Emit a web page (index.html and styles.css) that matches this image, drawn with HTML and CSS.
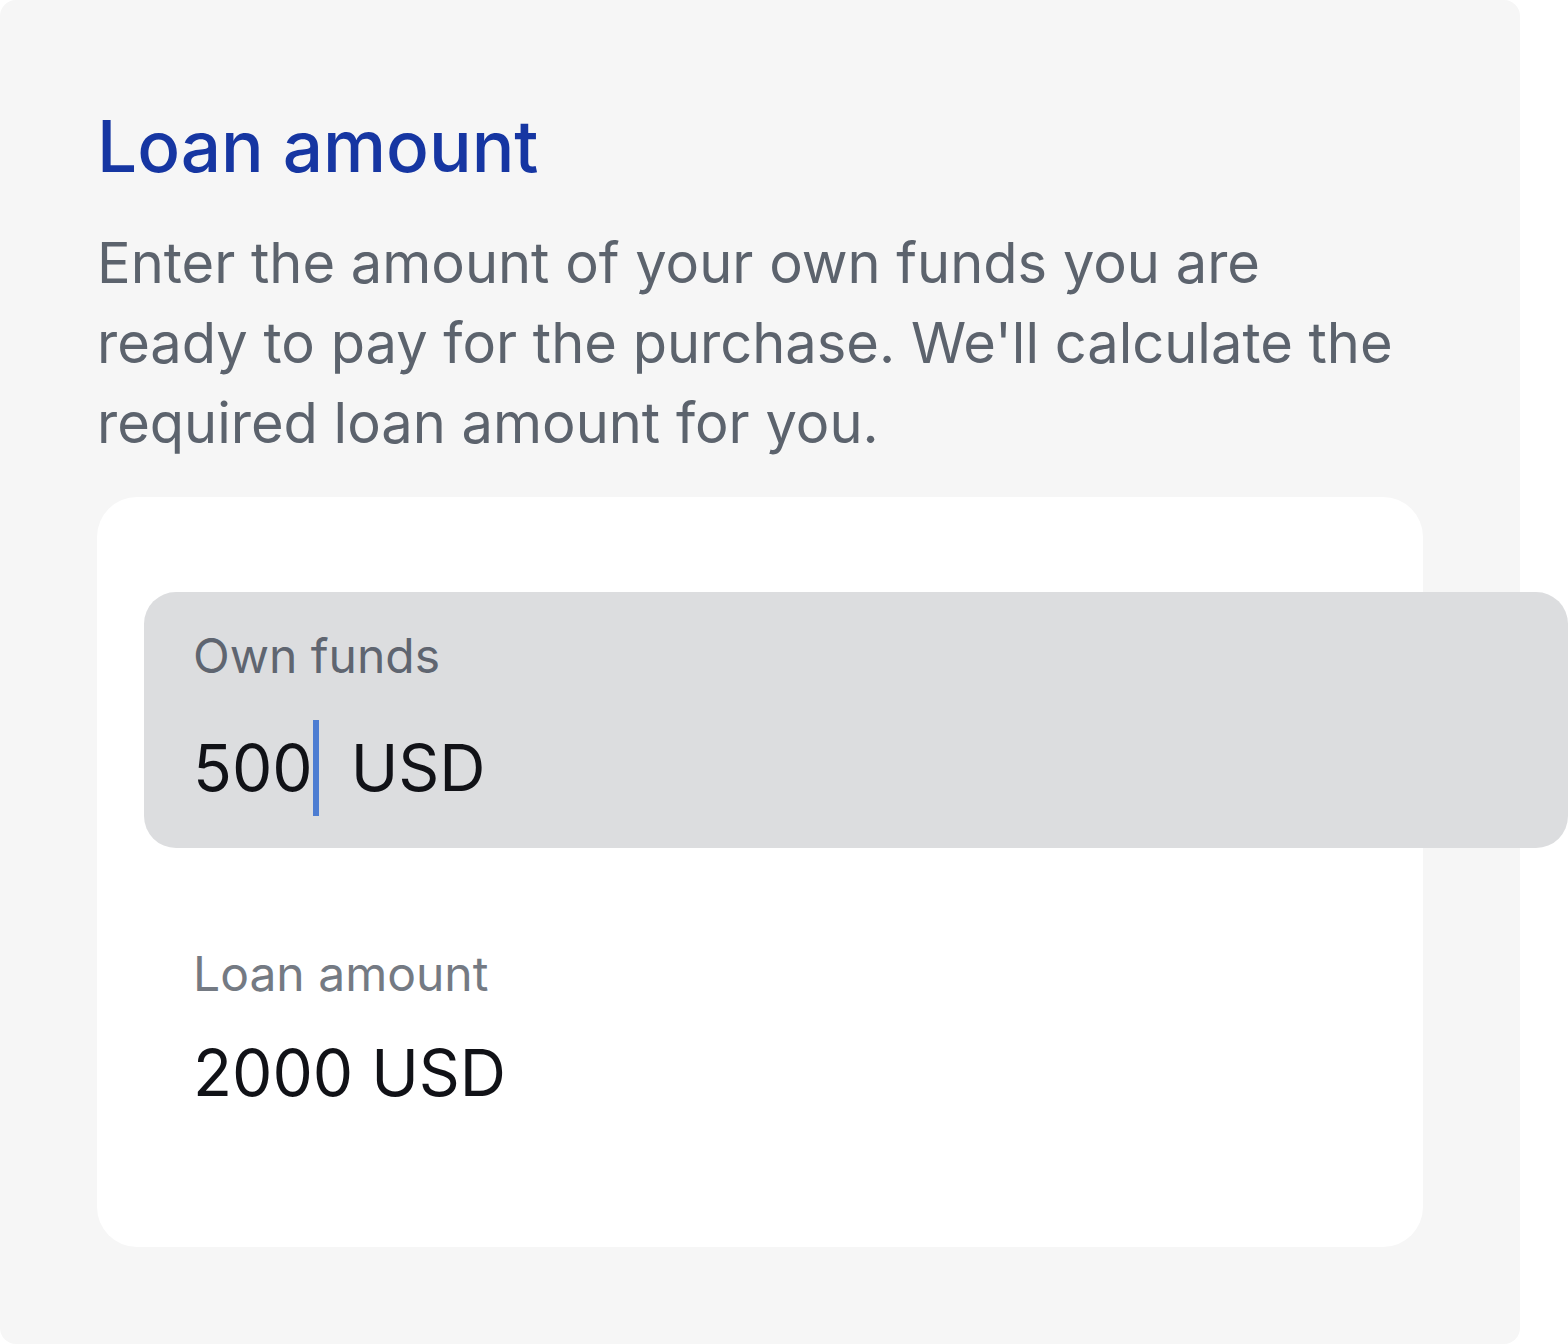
FILE: index.html
```html
<!DOCTYPE html>
<html lang="en">
<head>
    <meta charset="UTF-8">
    <meta name="viewport" content="width=device-width, initial-scale=1.0">
    <link rel="stylesheet" href="styles.css">
</head>
<body>
    <div class="panel">
        <h1 class="panel-title">Loan amount</h1>
        <p class="panel-text">Enter the amount of your own funds you are ready to pay for the purchase. We'll calculate the required loan amount for you.</p>

        <div class="card">
            <!-- focused input field -->
            <div class="field field-active">
                <div class="field-label">Own funds</div>
                <div class="field-value"><span>500</span><span class="caret"></span><span class="currency">USD</span></div>
            </div>

            <div class="field field-result">
                <div class="field-label">Loan amount</div>
                <div class="field-value">2000 USD</div>
            </div>
        </div>
    </div>
</body>
</html>
```

FILE: styles.css
```css
body {
    margin: 0;
    background-color: #fff;
    font-family: Inter, "Noto Sans", sans-serif;
    overflow: hidden;
}

.panel {
    width: 1520px;
    height: 1344px;
    box-sizing: border-box;
    background-color: #f6f6f6;
    border-radius: 16px;
    padding: 98px 97px 97px 97px;
}

.panel-title {
    margin: 0;
    font-size: 71px;
    line-height: 96px;
    font-weight: 500;
    color: #1636a2;
}

.panel-text {
    margin: 29px 0 0 0;
    font-size: 56px;
    line-height: 80px;
    color: #5c636d;
}

.card {
    margin-top: 34px;
    background-color: #fff;
    border-radius: 40px;
    padding: 95px 0 126px 47px;
}

.field-active {
    width: 1424px;
    box-sizing: border-box;
    background-color: #dcdddf;
    border-radius: 32px;
    padding: 32px 49px;
}

.field-label {
    font-size: 48px;
    line-height: 64px;
    color: #5f6570;
}

.field-value {
    margin-top: 32px;
    font-size: 64px;
    line-height: 96px;
    color: #111217;
    display: flex;
    align-items: stretch;
    white-space: pre;
}

.caret {
    width: 6px;
    background-color: #4d7dd2;
}

.currency {
    margin-left: 32px;
}

.field-result {
    margin-top: 94px;
    padding-left: 49px;
}

.field-result .field-label {
    color: #747a83;
}

.field-result .field-value {
    margin-top: 19px;
}
```
